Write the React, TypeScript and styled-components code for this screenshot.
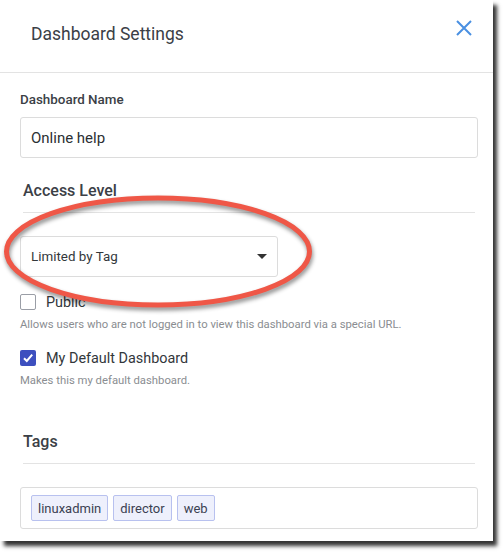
import React from "react";
import styled, { createGlobalStyle } from "styled-components";

const Global = createGlobalStyle`
  html, body { margin: 0; padding: 0; background: #ffffff; }
  body { font-family: Roboto, "Liberation Sans", Arial, sans-serif; }
  * { box-sizing: border-box; }
`;

const Stage = styled.div`
  width: 503px;
  height: 552px;
  overflow: hidden;
  background: #fff;
`;

const Panel = styled.div`
  position: relative;
  width: 493px;
  height: 541px;
  background: #fff;
  box-shadow: 4px 5px 4px rgba(0, 0, 0, 0.8);
  display: flex;
  flex-direction: column;
`;

const Header = styled.div`
  height: 73px;
  border-bottom: 1px solid #e3e3e3;
  display: flex;
  align-items: flex-start;
  justify-content: space-between;
  padding: 24px 21px 0 31px;
`;

const Title = styled.h1`
  margin: 0;
  font-size: 17.5px;
  font-weight: 400;
  color: #3b4046;
  line-height: 20px;
`;

const CloseButton = styled.button`
  border: 0;
  background: none;
  padding: 0;
  margin-top: -4px;
  width: 16px;
  height: 16px;
  display: flex;
  cursor: pointer;
`;

const Body = styled.div`
  padding: 0 15px 0 20px;
  display: flex;
  flex-direction: column;
`;

const FieldLabel = styled.label`
  margin-top: 19px;
  font-size: 13.4px;
  font-weight: 500;
  color: #3b4046;
  line-height: 16px;
`;

const TextBox = styled.div`
  margin-top: 9px;
  height: 41px;
  border: 1px solid #dcdcdc;
  border-radius: 3px;
  display: flex;
  align-items: center;
  padding: 0 10px;
  font-size: 15px;
  color: #2b2f33;
`;

const SectionHeading = styled.h2<{ $top: number }>`
  margin: ${(p) => p.$top}px 3px 0 3px;
  padding-bottom: 11px;
  border-bottom: 1px solid #e3e3e3;
  font-size: 16px;
  font-weight: 500;
  line-height: 20px;
  color: #3b4046;
`;

const SelectBox = styled.div`
  margin-top: 23px;
  width: 258px;
  height: 41px;
  border: 1px solid #dcdcdc;
  border-radius: 3px;
  display: flex;
  align-items: center;
  justify-content: space-between;
  padding: 0 10px;
  font-size: 13.4px;
  color: #33373b;
`;

const Caret = styled.span`
  width: 0;
  height: 0;
  border-left: 5px solid transparent;
  border-right: 5px solid transparent;
  border-top: 5px solid #333;
`;

const CheckRow = styled.div<{ $top: number }>`
  margin-top: ${(p) => p.$top}px;
  display: flex;
  align-items: center;
  gap: 10px;
  height: 16px;
`;

const Box = styled.span<{ $checked?: boolean }>`
  width: 16px;
  height: 16px;
  border-radius: 2px;
  border: ${(p) => (p.$checked ? "none" : "1px solid #9a9ea6")};
  background: ${(p) => (p.$checked ? "#3d4fbf" : "#fff")};
  display: flex;
  align-items: center;
  justify-content: center;
`;

const CheckLabel = styled.span`
  font-size: 14.4px;
  color: #33373b;
`;

const Help = styled.div`
  margin-top: 8px;
  font-size: 11.3px;
  line-height: 14px;
  color: #8a8d91;
`;

const TagBox = styled.div`
  margin-top: 23px;
  height: 42px;
  border: 1px solid #dcdcdc;
  border-radius: 3px;
  display: flex;
  align-items: center;
  gap: 5px;
  padding: 0 10px;
`;

const Chip = styled.span`
  height: 26px;
  padding: 0 6px;
  display: flex;
  align-items: center;
  background: #eef0fc;
  border: 1px solid #b8c1ef;
  border-radius: 2px;
  font-size: 13px;
  color: #3b4152;
`;

const Annotation = styled.svg`
  position: absolute;
  left: 0;
  top: 0;
  width: 493px;
  height: 541px;
  pointer-events: none;
  filter: drop-shadow(1px 3px 2px rgba(0, 0, 0, 0.45));
`;

export default function App() {
  return (
    <Stage>
      <Global />
      <Panel>
        <Header>
          <Title>Dashboard Settings</Title>
          <CloseButton aria-label="Close">
            <svg width="16" height="16" viewBox="0 0 16 16">
              <path d="M1 1 L15 15 M15 1 L1 15" stroke="#4a90e2" strokeWidth="2" />
            </svg>
          </CloseButton>
        </Header>
        <Body>
          <FieldLabel>Dashboard Name</FieldLabel>
          <TextBox>Online help</TextBox>
          <SectionHeading $top={23}>Access Level</SectionHeading>
          <SelectBox>
            Limited by Tag
            <Caret />
          </SelectBox>
          <CheckRow $top={17}>
            <Box />
            <CheckLabel>Public</CheckLabel>
          </CheckRow>
          <Help>Allows users who are not logged in to view this dashboard via a special URL.</Help>
          <CheckRow $top={18}>
            <Box $checked>
              <svg width="12" height="12" viewBox="0 0 12 12">
                <path d="M2 6.2 L4.8 9 L10.2 2.6" stroke="#fff" strokeWidth="2" fill="none" />
              </svg>
            </Box>
            <CheckLabel>My Default Dashboard</CheckLabel>
          </CheckRow>
          <Help>Makes this my default dashboard.</Help>
          <SectionHeading $top={44}>Tags</SectionHeading>
          <TagBox>
            <Chip>linuxadmin</Chip>
            <Chip>director</Chip>
            <Chip>web</Chip>
          </TagBox>
        </Body>
        <Annotation viewBox="0 0 493 541">
          <ellipse
            cx="158"
            cy="251.5"
            rx="151.5"
            ry="53.5"
            fill="none"
            stroke="#ef5747"
            strokeWidth="5"
          />
        </Annotation>
      </Panel>
    </Stage>
  );
}
